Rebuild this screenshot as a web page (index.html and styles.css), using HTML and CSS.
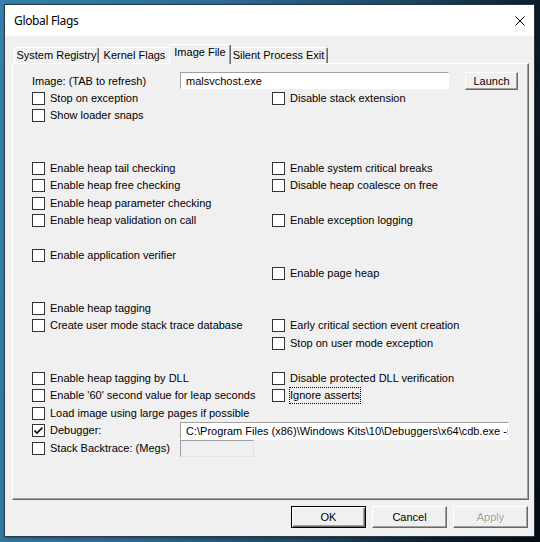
FILE: index.html
```html
<!DOCTYPE html>
<html>
<head>
<meta charset="utf-8">
<title>Global Flags</title>
<link rel="stylesheet" href="styles.css">
</head>
<body>
<div class="window">
  <div class="titlebar">
    <span class="title">Global Flags</span>
    <span class="close"><svg width="10" height="10" viewBox="0 0 10 10"><path d="M0.5 0.5L9.5 9.5M9.5 0.5L0.5 9.5" stroke="#000" stroke-width="1" fill="none"/></svg></span>
  </div>
  <div class="client">
    <div class="tabs">
      <div class="tab t1">System Registry</div>
      <div class="tab t2">Kernel Flags</div>
      <div class="tab t3 active">Image File</div>
      <div class="tab t4">Silent Process Exit</div>
    </div>
    <div class="panel">
      <div class="flags">
        <div class="full">
          <span class="lbl-img">Image: (TAB to refresh)</span>
          <div class="edit edit-img">malsvchost.exe</div>
          <div class="btn launch">Launch</div>
        </div>

        <label class="chk"><span class="cb"></span>Stop on exception</label>
        <label class="chk"><span class="cb"></span>Disable stack extension</label>

        <label class="chk"><span class="cb"></span>Show loader snaps</label>
        <div></div>

        <div></div><div></div>
        <div></div><div></div>

        <label class="chk"><span class="cb"></span>Enable heap tail checking</label>
        <label class="chk"><span class="cb"></span>Enable system critical breaks</label>

        <label class="chk"><span class="cb"></span>Enable heap free checking</label>
        <label class="chk"><span class="cb"></span>Disable heap coalesce on free</label>

        <label class="chk"><span class="cb"></span>Enable heap parameter checking</label>
        <div></div>

        <label class="chk"><span class="cb"></span>Enable heap validation on call</label>
        <label class="chk"><span class="cb"></span>Enable exception logging</label>

        <div></div><div></div>

        <label class="chk"><span class="cb"></span>Enable application verifier</label>
        <div></div>

        <div></div>
        <label class="chk"><span class="cb"></span>Enable page heap</label>

        <div></div><div></div>

        <label class="chk"><span class="cb"></span>Enable heap tagging</label>
        <div></div>

        <label class="chk"><span class="cb"></span>Create user mode stack trace database</label>
        <label class="chk"><span class="cb"></span>Early critical section event creation</label>

        <div></div>
        <label class="chk"><span class="cb"></span>Stop on user mode exception</label>

        <div></div><div></div>

        <label class="chk"><span class="cb"></span>Enable heap tagging by DLL</label>
        <label class="chk"><span class="cb"></span>Disable protected DLL verification</label>

        <label class="chk"><span class="cb"></span>Enable '60' second value for leap seconds</label>
        <label class="chk"><span class="cb"></span><span class="focus">Ignore asserts</span></label>

        <label class="chk"><span class="cb"></span>Load image using large pages if possible</label>
        <div></div>

        <div class="full">
          <label class="chk"><span class="cb checked"><svg width="11" height="11" viewBox="0 0 11 11"><path d="M1.5 5.5L4 8L9.5 2.5" stroke="#000" stroke-width="1.6" fill="none"/></svg></span><span class="lbl-dbg">Debugger:</span></label>
          <div class="edit edit-dbg">C:\Program Files (x86)\Windows Kits\10\Debuggers\x64\cdb.exe -server</div>
        </div>

        <div class="full">
          <label class="chk"><span class="cb"></span><span class="lbl-dbg">Stack Backtrace: (Megs)</span></label>
          <div class="edit edit-sb disabled"></div>
        </div>
      </div>
    </div>
    <div class="buttons">
      <div class="btn dlg default">OK</div>
      <div class="btn dlg">Cancel</div>
      <div class="btn dlg disabled-btn">Apply</div>
    </div>
  </div>
</div>
</body>
</html>
```

FILE: styles.css
```css
* { box-sizing: border-box; }
html, body { margin: 0; padding: 0; }
body {
  width: 540px;
  height: 542px;
  overflow: hidden;
  background: linear-gradient(100deg, #3580ae 0%, #2a6d98 35%, #1b4663 65%, #0c1d2a 85%, #060d14 100%);
  font-family: "Liberation Sans", Arial, sans-serif;
  font-size: 11px;
  color: #000;
}
.window {
  margin: 4px 0 0 4px;
  width: 531px;
  height: 533px;
  border: 1px solid #2c3a45;
  background: #f0f0f0;
  display: flex;
  flex-direction: column;
  box-shadow: 1px 1px 3px rgba(0,0,0,0.4);
}
.titlebar {
  height: 31px;
  background: #fff;
  display: flex;
  align-items: center;
  padding-left: 9px;
  flex: none;
}
.title {
  font-family: "Noto Sans", "Open Sans", sans-serif;
  font-size: 12px;
  letter-spacing: -0.35px;
  color: #000;
}
.close {
  margin-left: auto;
  margin-right: 9px;
  width: 10px;
  height: 10px;
  display: flex;
}
.client {
  flex: 1;
  padding: 8px 5px 0 7px;
  display: flex;
  flex-direction: column;
}
.tabs {
  display: flex;
  align-items: flex-end;
  height: 19px;
  padding-left: 2px;
  position: relative;
  z-index: 1;
}
.tab {
  height: 16px;
  line-height: 14px;
  text-align: center;
  white-space: nowrap;
  background: #f0f0f0;
  border-top: 1px solid #fff;
  border-left: 1px solid #fff;
  border-right: 1px solid #696969;
  box-shadow: inset -1px 0 #a0a0a0;
  border-radius: 2px 2px 0 0;
}
.t1 { width: 85px; }
.t2 { width: 72px; border-left: none; margin-right: -2px; }
.t3 { width: 62px; }
.t4 { width: 99px; margin-left: -2px; }
.tab.active {
  height: 20px;
  margin-bottom: -1px;
  line-height: 15px;
  position: relative;
  z-index: 2;
}
.panel {
  height: 437px;
  border-top: 1px solid #fff;
  border-left: 1px solid #fff;
  border-right: 1px solid #696969;
  border-bottom: 1px solid #696969;
  box-shadow: inset -1px -1px #a0a0a0;
  padding: 8px 0 0 19px;
}
.flags {
  display: grid;
  grid-template-columns: 240px 1fr;
  grid-auto-rows: 17.5px;
  align-items: center;
}
.full {
  grid-column: 1 / -1;
  display: flex;
  align-items: center;
}
.lbl-img { width: 148px; white-space: nowrap; }
.chk {
  display: flex;
  align-items: center;
  gap: 5px;
  white-space: nowrap;
  line-height: 13px;
}
.cb {
  width: 13px;
  height: 13px;
  flex: none;
  border: 1px solid #333;
  background: #fff;
  display: flex;
  align-items: center;
  justify-content: center;
}
.focus {
  display: inline-block;
  height: 17px;
  line-height: 15px;
  border: 1px dotted #000;
  margin-left: -1px;
}
.lbl-dbg { width: 130px; }
.edit {
  background: #fff;
  border-top: 1px solid #a0a0a0;
  border-left: 1px solid #a0a0a0;
  border-right: 1px solid #fff;
  border-bottom: 1px solid #fff;
  padding-left: 5px;
  white-space: nowrap;
  overflow: hidden;
  display: flex;
  align-items: center;
}
.edit-img { width: 269px; height: 17px; }
.edit-dbg { width: 329px; height: 18px; }
.edit-sb { width: 74px; height: 17px; }
.edit.disabled { background: #f0f0f0; border-right-color: #e3e3e3; border-bottom-color: #e3e3e3; }
.btn {
  background: #f0f0f0;
  border-top: 1px solid #fff;
  border-left: 1px solid #fff;
  border-right: 1px solid #696969;
  border-bottom: 1px solid #696969;
  box-shadow: inset -1px -1px #a0a0a0;
  display: flex;
  align-items: center;
  justify-content: center;
  white-space: nowrap;
}
.launch { width: 53px; height: 18px; margin-left: 16px; }
.buttons {
  display: flex;
  justify-content: flex-end;
  gap: 6px;
  margin-top: 6px;
  margin-right: 1px;
}
.dlg { width: 75px; height: 22px; }
.default {
  border: 1px solid #000;
  box-shadow: inset 1px 1px #fff, inset -1px -1px #696969, inset -2px -2px #a0a0a0;
}
.disabled-btn {
  color: #a0a0a0;
  text-shadow: 1px 1px #fff;
}
```
